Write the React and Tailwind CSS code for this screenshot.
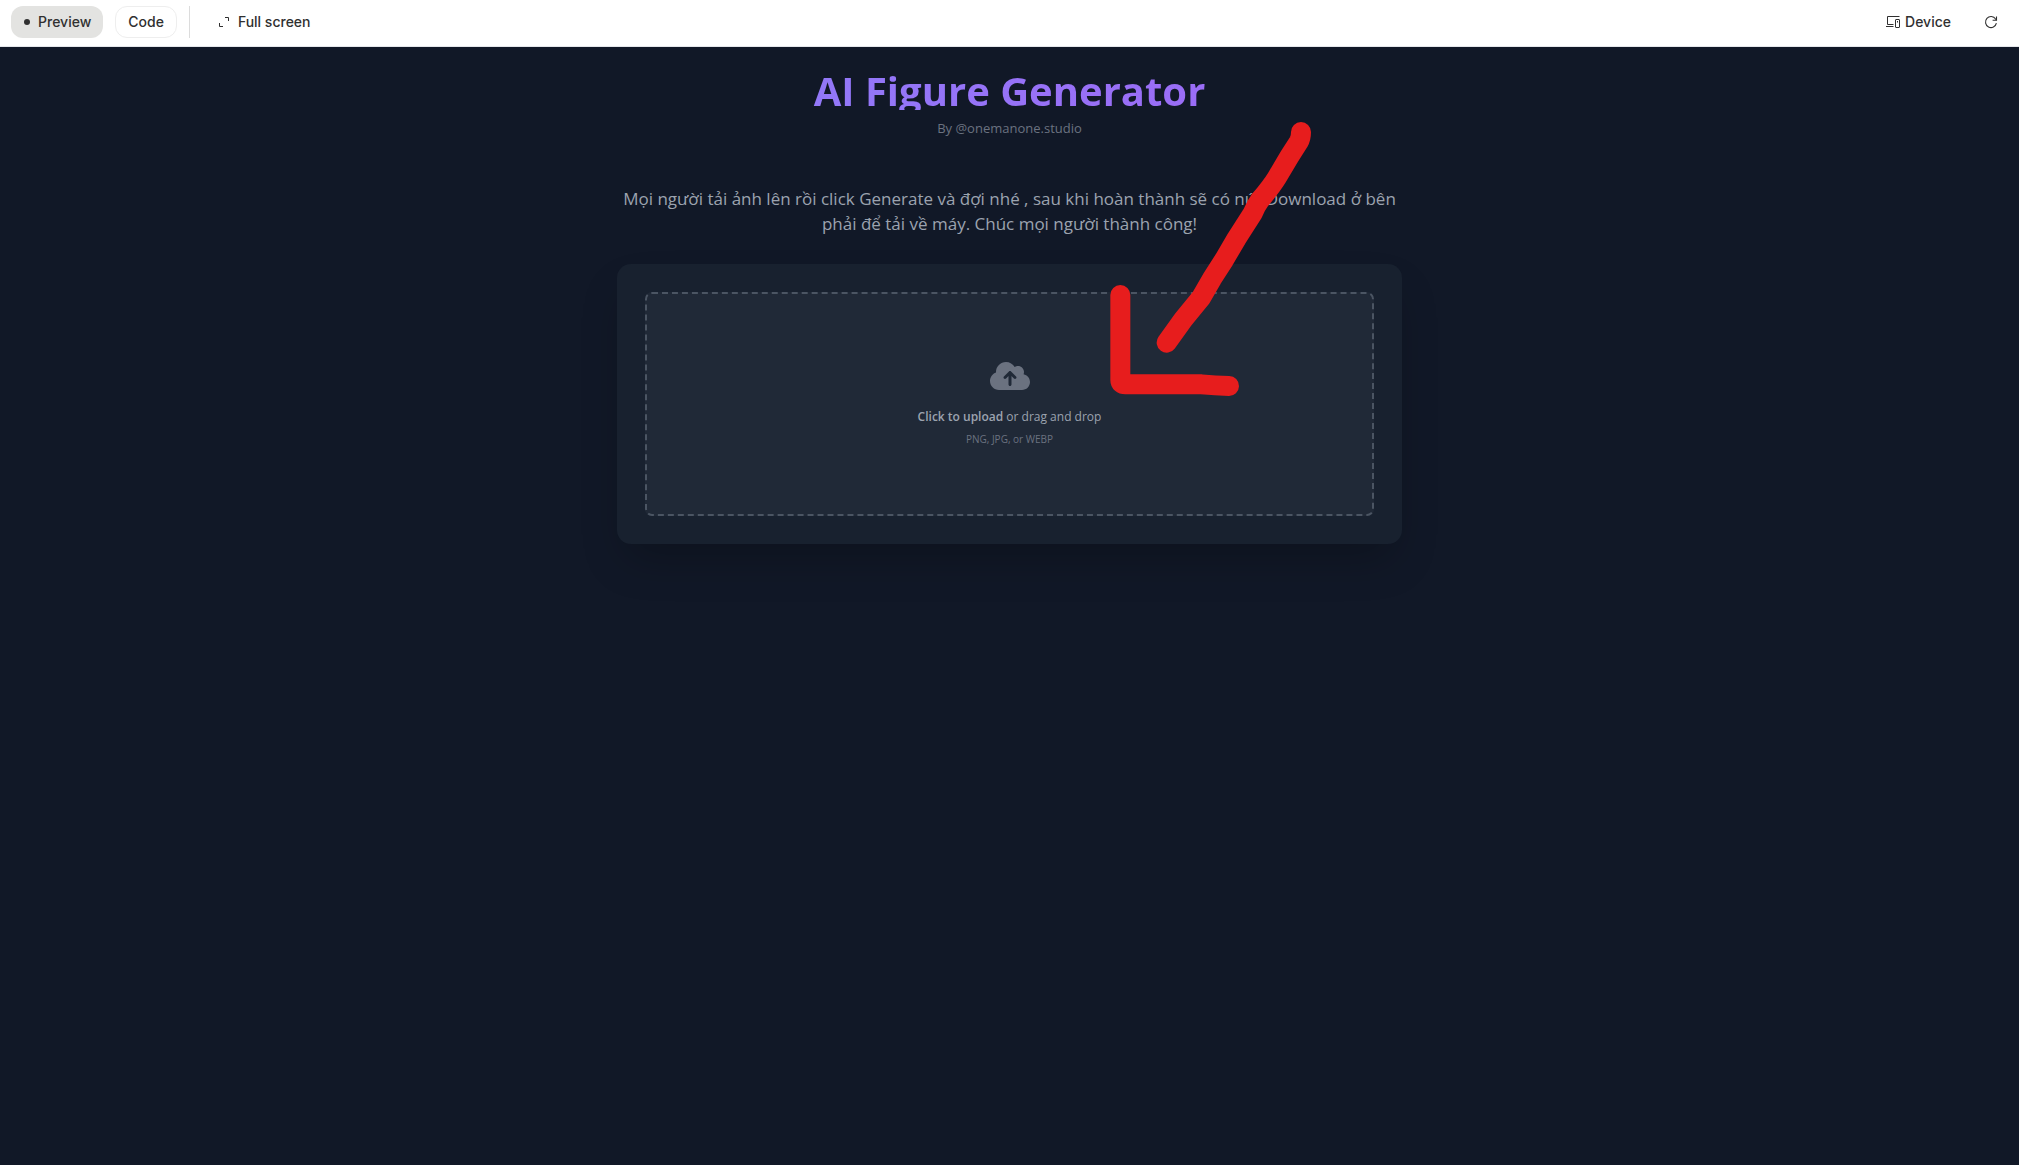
import React, { useState } from "react";
import { FaCloudArrowUp } from "react-icons/fa6";

function Toolbar({ tab, onTabChange }) {
    return (
        <header className="flex h-[47px] items-center justify-between border-b border-gray-200 bg-white pb-0.5 pl-[11px] pr-3 font-['Inter',sans-serif] text-sm font-medium text-[#303030]">
            <div className="flex h-8 items-center">
                <button
                    className={`flex h-8 items-center gap-[7px] rounded-xl px-3 ${
                        tab === "preview" ? "bg-[#e3e3e1]" : "bg-white"
                    }`}
                    onClick={() => onTabChange("preview")}
                >
                    <span className="mx-px h-1.5 w-1.5 rounded-full bg-[#303030]" />
                    Preview
                </button>
                <button
                    className="ml-3 h-8 rounded-xl border border-[#eeeeee] px-3"
                    onClick={() => onTabChange("code")}
                >
                    Code
                </button>
                <div className="ml-3 h-8 w-px bg-[#dcdcdc]" />
                <button className="ml-7 flex h-8 items-center gap-2">
                    <svg className="h-3 w-3" viewBox="0 0 12 12" fill="none" stroke="currentColor" aria-hidden="true">
                        <path d="M7 1.5h3.5V5M1.5 7v3.5H5" />
                    </svg>
                    Full screen
                </button>
            </div>
            <div className="flex h-8 items-center">
                <button className="flex h-8 items-center gap-1">
                    <svg className="h-4 w-4" viewBox="0 0 16 16" fill="none" stroke="currentColor" aria-hidden="true">
                        <path d="M14.5 2.5h-12v8M1 12.5h7.5M2.5 10.5h6" />
                        <rect x="10.5" y="5.5" width="4" height="8" rx="0.5" />
                        <path d="M12.5 7v1.5" />
                    </svg>
                    Device
                </button>
                <button className="ml-6 flex h-8 w-8 items-center justify-center" aria-label="Refresh">
                    <svg className="h-4 w-4" viewBox="0 0 16 16" fill="none" stroke="currentColor" strokeWidth="1.1" aria-hidden="true">
                        <path d="M13.4 9.2A5.5 5.5 0 1 1 12.6 5L13.5 6.2" />
                        <path d="M13.5 2.4v3.9H9.6" />
                    </svg>
                </button>
            </div>
        </header>
    );
}

function ArrowMark() {
    return (
        <svg
            className="pointer-events-none absolute left-[463px] top-[53px] h-[310px] w-[260px]"
            viewBox="0 0 780 930"
            fill="none"
            stroke="#e71d1d"
            strokeWidth="60"
            strokeLinecap="round"
            strokeLinejoin="round"
            aria-hidden="true"
        >
            <path d="M663 96Q663 114 656 126L628 170L590 234Q574 260 540 300Q528 316 518 340L470 415L432 480L396 536L364 592L310 658L260 728" />
            <path d="M121 585V840Q121 853 136 853H365Q405 857 447 858" />
        </svg>
    );
}

export default function App() {
    const [tab, setTab] = useState("preview");

    return (
        <div className="flex min-h-screen flex-col bg-[#111827]">
            <Toolbar tab={tab} onTabChange={setTab} />

            <main className="relative mx-auto w-full max-w-[785px] pt-[21px] font-['Open_Sans','Noto_Sans',sans-serif]">
                <div className="text-center">
                    <h1 className="h-[42px] bg-gradient-to-r from-[#8e7df9] to-[#9e67f5] bg-clip-text text-[40px] font-bold leading-[46px] text-transparent">
                        AI Figure Generator
                    </h1>
                    <p className="mt-2 text-[13px] leading-5 text-[#6b7280]">By @onemanone.studio</p>
                    <p className="mt-12 text-[17px] leading-[25px] text-[#9ca3af]">
                        Mọi người tải ảnh lên rồi click Generate và đợi nhé , sau khi hoàn thành sẽ có nút Download ở bên phải
                        để tải về máy. Chúc mọi người thành công!
                    </p>
                </div>

                <section className="mt-7 rounded-[14px] bg-[#18212f] p-7 shadow-[0_22px_44px_-10px_rgba(0,0,0,0.25)]">
                    <label
                        htmlFor="figure-upload"
                        className="flex h-56 cursor-pointer flex-col items-center justify-center rounded-[7px] border-2 border-dashed border-[#4b5563] bg-[#202937] pb-0.5"
                    >
                        <FaCloudArrowUp className="h-8 w-10 text-[#6b7280]" />
                        <p className="mt-4 text-xs leading-[18px] text-[#9ca3af]">
                            <span className="font-semibold">Click to upload</span> or drag and drop
                        </p>
                        <p className="mt-1.5 text-[10px] leading-[14px] text-[#6b7280]">PNG, JPG, or WEBP</p>
                        <input
                            id="figure-upload"
                            type="file"
                            accept="image/png,image/jpeg,image/webp"
                            className="sr-only"
                        />
                    </label>
                </section>

                <ArrowMark />
            </main>
        </div>
    );
}
